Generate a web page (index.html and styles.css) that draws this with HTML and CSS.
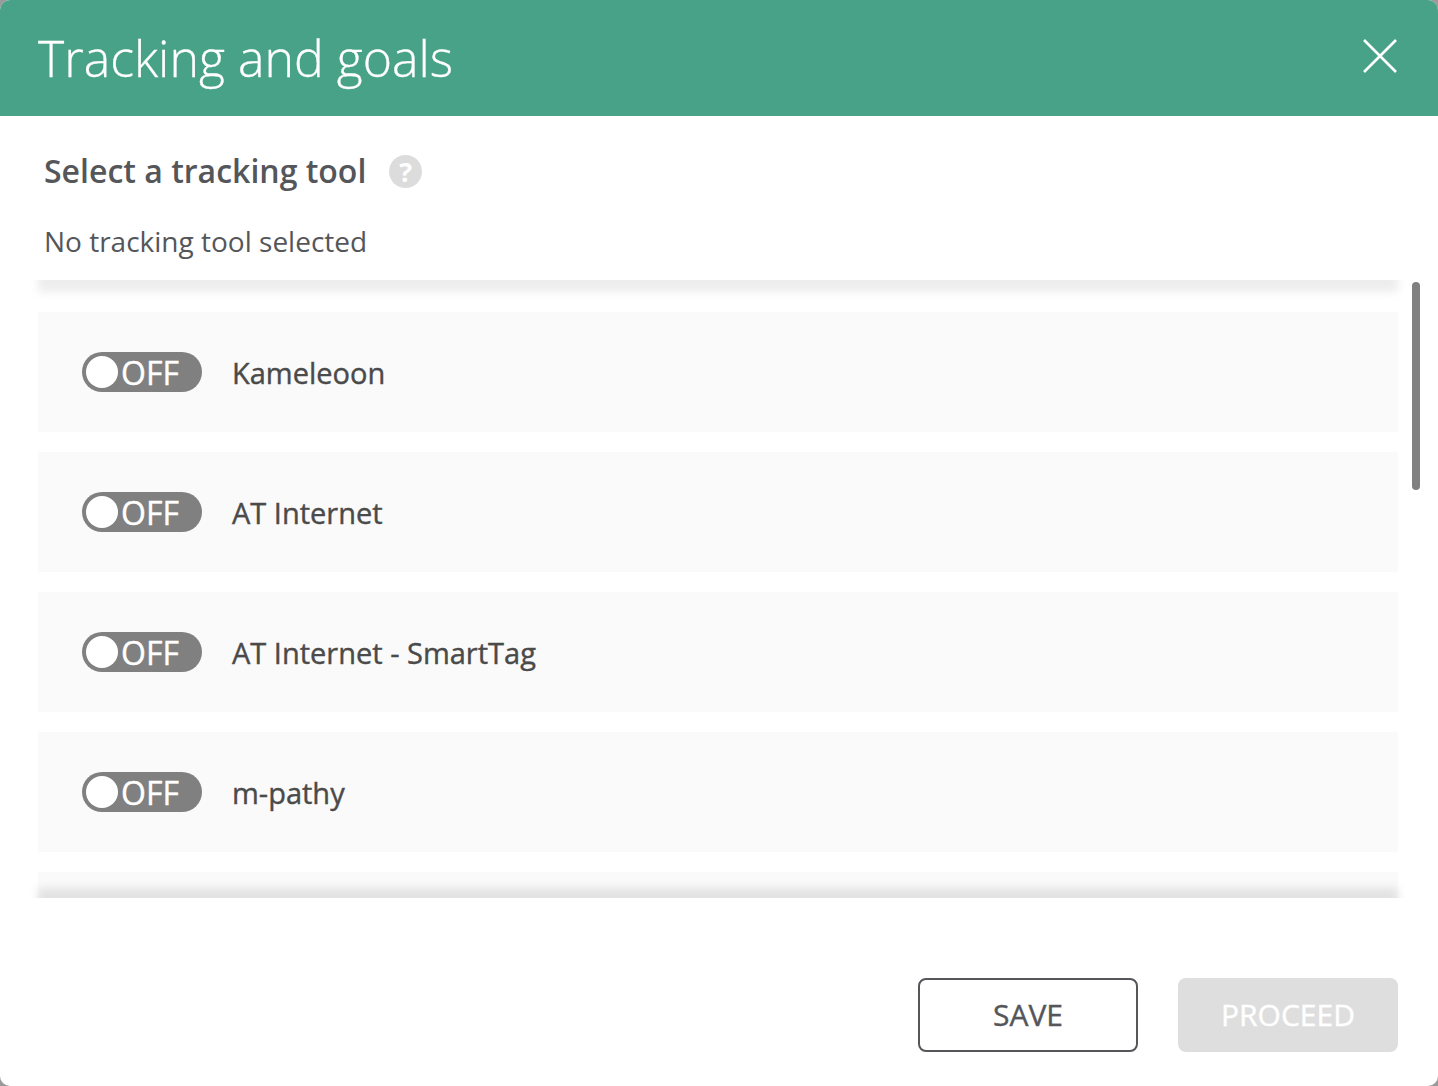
FILE: index.html
```html
<!DOCTYPE html>
<html lang="en">
<head>
    <meta charset="UTF-8">
    <meta name="viewport" content="width=device-width, initial-scale=1.0">
    <title>Tracking and goals</title>
    <link rel="stylesheet" href="styles.css">
</head>
<body>
    <div class="modal">
        <div class="modal-header">
            <h1>Tracking and goals</h1>
            <button class="close" aria-label="Close">
                <svg width="36" height="36" viewBox="0 0 36 36">
                    <path d="M2 2 L34 34 M34 2 L2 34" stroke="#fff" stroke-width="2.6" fill="none"/>
                </svg>
            </button>
        </div>

        <div class="modal-body">
            <div class="section-title">
                <h2>Select a tracking tool</h2>
                <span class="help">?</span>
            </div>
            <p class="status">No tracking tool selected</p>

            <div class="list-wrap">
                <div class="list">
                    <div class="tool">
                        <div class="toggle"><span class="knob"></span><span class="toggle-text">OFF</span></div>
                        <span class="tool-name">Kameleoon</span>
                    </div>
                    <div class="tool">
                        <div class="toggle"><span class="knob"></span><span class="toggle-text">OFF</span></div>
                        <span class="tool-name">AT Internet</span>
                    </div>
                    <div class="tool">
                        <div class="toggle"><span class="knob"></span><span class="toggle-text">OFF</span></div>
                        <span class="tool-name">AT Internet - SmartTag</span>
                    </div>
                    <div class="tool">
                        <div class="toggle"><span class="knob"></span><span class="toggle-text">OFF</span></div>
                        <span class="tool-name">m-pathy</span>
                    </div>
                    <div class="tool"></div>
                </div>
                <div class="shade shade-top"></div>
                <div class="shade shade-bottom"></div>
                <div class="scroll-thumb"></div>
            </div>
        </div>

        <div class="modal-footer">
            <button class="btn btn-save">SAVE</button>
            <button class="btn btn-proceed" disabled>PROCEED</button>
        </div>
    </div>
</body>
</html>
```

FILE: styles.css
```css
html, body {
    height: 100%;
}

body {
    margin: 0;
    overflow: hidden;
    background-color: #9a9a9a;
    font-family: "Open Sans", "Noto Sans", sans-serif;
    color: #54565a;
}

.modal {
    height: 1086px;
    background: #fff;
    border-radius: 10px;
    overflow: hidden;
    display: flex;
    flex-direction: column;
}

.modal-header {
    height: 116px;
    flex: none;
    background-color: #48a287;
    display: flex;
    align-items: center;
    justify-content: space-between;
    padding: 0 40px 0 38px;
}

.modal-header h1 {
    margin: 0;
    font-size: 50px;
    font-weight: 300;
    line-height: 116px;
    color: #fff;
    -webkit-text-stroke: 0.3px #fff;
}

.close {
    width: 36px;
    height: 36px;
    padding: 0;
    margin-top: -4px;
    background: none;
    border: none;
    display: block;
}

.close svg {
    display: block;
}

.modal-body {
    flex: 1;
    padding: 0 40px 0 38px;
}

.section-title {
    display: flex;
    align-items: center;
    height: 110px;
    padding-left: 6px;
}

.section-title h2 {
    margin: 0;
    padding-bottom: 1px;
    font-size: 32px;
    font-weight: 600;
    line-height: 109px;
    color: #54565a;
}

.help {
    width: 33px;
    height: 33px;
    margin-left: 23px;
    border-radius: 50%;
    background-color: #dcdcdc;
    color: #fff;
    font-size: 27px;
    font-weight: 700;
    line-height: 33px;
    text-align: center;
}

.status {
    margin: 0;
    padding-left: 6px;
    height: 54px;
    font-size: 28px;
    line-height: 30px;
    color: #54565a;
}

.list-wrap {
    position: relative;
    height: 618px;
}

.list {
    height: 618px;
    overflow: hidden;
    padding-top: 32px;
    box-sizing: border-box;
}

.tool {
    height: 120px;
    margin-bottom: 20px;
    background-color: #fafafa;
    display: flex;
    align-items: center;
    padding-left: 44px;
}

.toggle {
    width: 120px;
    height: 40px;
    border-radius: 20px;
    background-color: #808080;
    display: flex;
    align-items: center;
    padding-left: 4px;
    box-sizing: border-box;
}

.knob {
    width: 32px;
    height: 32px;
    border-radius: 50%;
    background-color: #fff;
    flex: none;
}

.toggle-text {
    margin-left: 3px;
    padding-top: 2px;
    font-size: 32px;
    line-height: 38px;
    color: #fff;
    -webkit-text-stroke: 0.4px #fff;
}

.tool-name {
    margin-left: 30px;
    padding-top: 1px;
    font-size: 29px;
    color: #4a4a4a;
    -webkit-text-stroke: 0.4px #4a4a4a;
}

/* soft scroll shadows, clipped to the list edge */
.shade {
    position: absolute;
    left: -10px;
    width: 1380px;
    height: 24px;
    overflow: hidden;
    pointer-events: none;
}

.shade::before {
    content: "";
    position: absolute;
    left: 10px;
    right: 10px;
    height: 22px;
    background-color: #ededed;
    filter: blur(4px);
}

.shade-top {
    top: 0;
}

.shade-top::before {
    top: -10px;
}

.shade-bottom {
    bottom: 0;
}

.shade-bottom::before {
    bottom: -12px;
    background-color: #e2e2e2;
}

.scroll-thumb {
    position: absolute;
    top: 2px;
    left: 1374px;
    width: 8px;
    height: 208px;
    border-radius: 4px;
    background-color: #808080;
}

.modal-footer {
    flex: none;
    display: flex;
    justify-content: flex-end;
    gap: 40px;
    padding: 0 40px 34px 0;
}

.btn {
    width: 220px;
    height: 74px;
    border-radius: 8px;
    font-family: inherit;
    font-size: 30px;
    box-sizing: border-box;
    padding: 0 0 2px;
}

.btn-save {
    background: #fff;
    border: 2px solid #54565a;
    color: #54565a;
    -webkit-text-stroke: 0.4px #54565a;
}

.btn-proceed {
    background-color: #dedede;
    border: none;
    color: #fff;
    -webkit-text-stroke: 0.4px #fff;
}
```
